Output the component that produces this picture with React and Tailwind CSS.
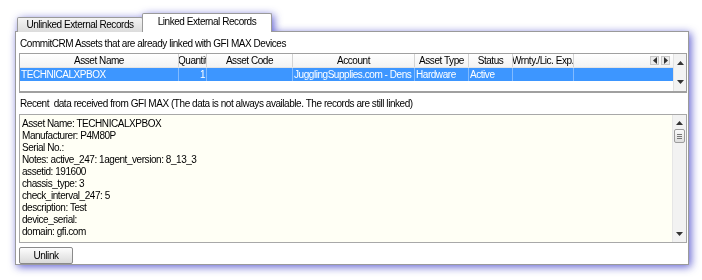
import React from "react";

const columns = [
  { name: "Asset Name", w: 159, value: "TECHNICALXPBOX", align: "left" },
  { name: "Quantit", w: 28, value: "1", align: "right" },
  { name: "Asset Code", w: 86, value: "", align: "left" },
  { name: "Account", w: 122, value: "JugglingSupplies.com - Dens", align: "left" },
  { name: "Asset Type", w: 54, value: "Hardware", align: "left" },
  { name: "Status", w: 44, value: "Active", align: "left" },
  { name: "Wrnty./Lic. Exp.", w: 61, value: "", align: "left" },
];

const details = [
  "Asset Name: TECHNICALXPBOX",
  "Manufacturer: P4M80P",
  "Serial No.:",
  "Notes: active_247: 1agent_version: 8_13_3",
  "assetid: 191600",
  "chassis_type: 3",
  "check_interval_247: 5",
  "description: Test",
  "device_serial:",
  "domain: gfi.com",
];

const Tri = ({ dir }) => {
  const pts = {
    up: "0,4 3.5,0 7,4",
    down: "0,0 3.5,4 7,0",
    left: "4,0 0,3.5 4,7",
    right: "0,0 4,3.5 0,7",
  }[dir];
  const vert = dir === "up" || dir === "down";
  return (
    <svg width={vert ? 7 : 4} height={vert ? 4 : 7} viewBox={vert ? "0 0 7 4" : "0 0 4 7"}>
      <polygon points={pts} fill="#333" />
    </svg>
  );
};

const App = () => {
  return (
    <div className="w-[702px] h-[280px] bg-white pt-[13px] pl-[15px] font-['Liberation_Sans',Arial,sans-serif] text-[10px] tracking-[-0.45px] text-black leading-[12px]">
      <div className="w-[674px] drop-shadow-[2px_2px_4px_rgba(80,80,205,0.9)]">
        {/* tabs */}
        <div className="flex items-end h-[19px] pl-[2px]">
          <div className="w-[126px] h-[15px] border border-b-0 border-[#9a9a9a] rounded-t-[2px] bg-gradient-to-b from-[#f4f4f4] to-[#dcdcdc] flex items-center justify-center">
            Unlinked External Records
          </div>
          <div className="w-[130px] h-[19px] -ml-px border border-b-0 border-[#9a9a9a] rounded-t-[2px] bg-white flex items-start pt-[2px] justify-center">
            Linked External Records
          </div>
        </div>

        {/* panel */}
        <div className="h-[234px] -mt-px bg-white border border-[#9a9a9a] pl-[3px] pr-[1px] pt-[6px]">
          <div className="h-[12px] pl-[1px]">CommitCRM Assets that are already linked with GFI MAX Devices</div>

          {/* table */}
          <div className="mt-[3px] h-[40px] border border-b-2 border-[#a0a0a0] flex bg-white">
            <div className="flex-1 flex flex-col overflow-hidden">
              <div className="h-[14px] flex items-center bg-gradient-to-b from-white to-[#f3f3f3] border-b border-[#e4e4e4]">
                {columns.map((c) => (
                  <div
                    key={c.name}
                    style={{ width: c.w }}
                    className="h-full shrink-0 flex items-center justify-center overflow-hidden whitespace-nowrap border-r border-[#d4d4d4]"
                  >
                    {c.name}
                  </div>
                ))}
                <div className="flex-1" />
                <div className="flex gap-[2px] pr-[3px]">
                  <div className="w-[9px] h-[9px] border border-[#c8c8c8] bg-[#ececec] flex items-center justify-center">
                    <Tri dir="left" />
                  </div>
                  <div className="w-[9px] h-[9px] border border-[#c8c8c8] bg-[#ececec] flex items-center justify-center">
                    <Tri dir="right" />
                  </div>
                </div>
              </div>
              <div className="h-[13px] flex bg-[#3d96ff] text-white">
                {columns.map((c) => (
                  <div
                    key={c.name}
                    style={{ width: c.w }}
                    className={`h-full shrink-0 flex items-center overflow-hidden whitespace-nowrap border-r border-[#82bbff] px-[1px] ${c.align === "right" ? "justify-end" : "justify-start"}`}
                  >
                    {c.value}
                  </div>
                ))}
                <div className="flex-1" />
              </div>
            </div>
            <div className="w-[13px] bg-[#f3f3f3] border-l border-[#e2e2e2] flex flex-col items-center justify-between py-[7px]">
              <Tri dir="up" />
              <Tri dir="down" />
            </div>
          </div>

          <div className="mt-[5px] h-[12px] pl-[1px]">
            Recent&nbsp; data received from GFI MAX (The data is not always available. The records are still linked)
          </div>

          {/* details */}
          <div className="mt-[4px] h-[129px] border border-[#a8a8a8] bg-[#fffff5] flex">
            <div className="flex-1 pl-[2px] pt-[3px] overflow-hidden">
              {details.map((d) => (
                <div key={d} className="h-[12px] whitespace-nowrap">
                  {d}
                </div>
              ))}
            </div>
            <div className="w-[14px] bg-[#f2f2f2] border-l border-[#e6e6e6] flex flex-col items-center pt-[6px] pb-[6px]">
              <Tri dir="up" />
              <div className="mt-[4px] w-[11px] h-[14px] rounded-[2px] border border-[#9c9c9c] bg-gradient-to-b from-[#fafafa] to-[#dedede] flex flex-col items-center justify-center gap-[1px]">
                <div className="w-[5px] h-px bg-[#777]" />
                <div className="w-[5px] h-px bg-[#777]" />
                <div className="w-[5px] h-px bg-[#777]" />
              </div>
              <div className="flex-1" />
              <Tri dir="down" />
            </div>
          </div>

          <button className="mt-[4px] w-[54px] h-[17px] border border-[#8a8a8a] rounded-[2px] bg-gradient-to-b from-[#fdfdfd] to-[#dadada] flex items-center justify-center">
            Unlink
          </button>
        </div>
      </div>
    </div>
  );
};

export default App;
